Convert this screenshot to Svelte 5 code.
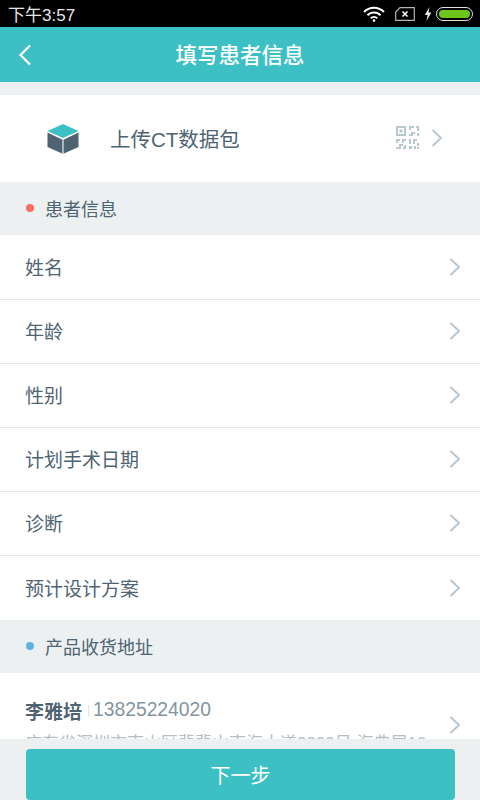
<script>
	const patient_rows = ['姓名', '年龄', '性别', '计划手术日期', '诊断', '预计设计方案']
</script>

<div class="page">
	<div class="status-bar">
		<span class="time">下午3:57</span>
		<div class="status-icons">
			<svg class="wifi" width="22" height="16" viewBox="0 0 22 16" fill="none" stroke="#fff" stroke-width="2">
				<path d="M1 6 A14 14 0 0 1 21 6" />
				<path d="M4.5 9.3 A9 9 0 0 1 17.5 9.3" />
				<path d="M7.8 12.2 A4.6 4.6 0 0 1 14.2 12.2" />
				<circle cx="11" cy="14.6" r="1.3" fill="#fff" stroke="none" />
			</svg>
			<svg class="sim" width="20" height="14" viewBox="0 0 20 14" fill="none" stroke="#b5b5b5">
				<path d="M5 .7 H19.3 V13.3 H.7 V5 Z" stroke-width="1.2" />
				<path d="M7.5 4.5 L12.5 9.5 M12.5 4.5 L7.5 9.5" stroke="#fff" stroke-width="1.6" />
			</svg>
			<svg class="bolt" width="8" height="14" viewBox="0 0 8 14">
				<path d="M5.5 0 L.8 8 H3.6 L2.5 14 L7.4 5.6 H4.5 Z" fill="#e8e8e8" />
			</svg>
			<div class="battery"><div class="battery-fill"></div></div>
		</div>
	</div>

	<header class="title-bar">
		<svg class="back" width="14" height="22" viewBox="0 0 14 22" fill="none" stroke="#fff" stroke-width="2.2">
			<path d="M12 1.5 L2.5 11 L12 20.5" />
		</svg>
		<h1>填写患者信息</h1>
	</header>

	<main class="content">
		<div class="upload-row">
			<svg class="box" width="32" height="32" viewBox="0 0 34 32">
				<path d="M17 0 L33.5 7.5 L17 15 L.5 7.5 Z" fill="#3cc0c4" />
				<path d="M.5 9 L16 16.4 V31.5 L.5 24.5 Z" fill="#4f6473" />
				<path d="M33.5 9 L18 16.4 V31.5 L33.5 24.5 Z" fill="#4f6473" />
				<path d="M17 16.4 V31.5" stroke="#a4b2ba" stroke-width="2" />
			</svg>
			<span class="upload-label">上传CT数据包</span>
			<svg class="qr" width="23" height="23" viewBox="0 0 23 23" fill="#b9c7cf">
				<path d="M0 0 H10 V10 H0 Z M2 2 V8 H8 V2 Z" fill-rule="evenodd" />
				<rect x="3.5" y="3.5" width="3" height="3" />
				<path d="M13 0 H18 V2 H15 V4 H13 Z M20 0 H23 V5 H21 V2 H20 Z M15 6 H19 V8 H17 V10 H13 V8 H15 Z M21 7 H23 V10 H21 Z" />
				<path d="M0 13 H4 V15 H2 V17 H0 Z M6 13 H10 V15 H8 V17 H6 Z M3 18 H7 V20 H5 V23 H0 V21 H3 Z M8 19 H10 V23 H7 V21 H8 Z" />
				<path d="M13 13 H15 V18 H13 Z M17 13 H21 V15 H19 V18 H17 Z M21 17 H23 V20 H21 Z M13 20 H16 V23 H13 Z M18 20 H20 V23 H18 Z M21 21 H23 V23 H21 Z" />
			</svg>
			<svg class="chevron" width="12" height="18" viewBox="0 0 12 18" fill="none" stroke="#b9c7cf" stroke-width="2">
				<path d="M1.5 1 L10 9 L1.5 17" />
			</svg>
		</div>

		<div class="section-title">
			<i class="dot red"></i>
			<span>患者信息</span>
		</div>
		<div class="rows">
			{#each patient_rows as row}
				<div class="row">
					<span>{row}</span>
					<svg class="chevron" width="12" height="18" viewBox="0 0 12 18" fill="none" stroke="#b9c7cf" stroke-width="2">
						<path d="M1.5 1 L10 9 L1.5 17" />
					</svg>
				</div>
			{/each}
		</div>

		<div class="section-title">
			<i class="dot blue"></i>
			<span>产品收货地址</span>
		</div>
		<div class="address">
			<div class="address-text">
				<div class="contact">
					<span class="name">李雅培</span>
					<i class="divider"></i>
					<span class="phone">13825224020</span>
				</div>
				<p>广东省深圳市南山区翡翡山南海大道3399号 海典居10</p>
			</div>
			<svg class="chevron" width="12" height="18" viewBox="0 0 12 18" fill="none" stroke="#b9c7cf" stroke-width="2">
				<path d="M1.5 1 L10 9 L1.5 17" />
			</svg>
		</div>
	</main>

	<footer class="footer">
		<button>下一步</button>
	</footer>
</div>

<style>
	:global(body) {
		margin: 0;
	}
	.page {
		width: 480px;
		height: 800px;
		display: flex;
		flex-direction: column;
		overflow: hidden;
		background-color: #ecf0f1;
		font-family: 'Liberation Sans', 'Noto Sans CJK SC', sans-serif;
		color: #4f6473;
	}
	.status-bar {
		height: 27px;
		flex-shrink: 0;
		display: flex;
		align-items: center;
		justify-content: space-between;
		padding: 0 7px 0 8px;
		background-color: #000;
		color: #e6e6e6;
	}
	.time {
		font-size: 17px;
	}
	.status-icons {
		display: flex;
		align-items: center;
	}
	.sim {
		margin-left: 10px;
	}
	.bolt {
		margin-left: 9px;
	}
	.battery {
		width: 37px;
		height: 14px;
		margin-left: 4px;
		padding: 2px;
		box-sizing: border-box;
		border: 1px solid #e0e0e0;
		border-radius: 7px;
	}
	.battery-fill {
		height: 100%;
		border-radius: 4px;
		background-color: #6cc61e;
	}
	.title-bar {
		height: 55px;
		flex-shrink: 0;
		position: relative;
		display: flex;
		align-items: center;
		justify-content: center;
		padding-bottom: 3px;
		box-sizing: border-box;
		background-color: #3cc0c4;
	}
	.back {
		position: absolute;
		left: 18px;
		top: 17px;
	}
	h1 {
		margin: 0;
		font-size: 21.5px;
		font-weight: 500;
		color: #fff;
	}
	.content {
		flex: 1;
		min-height: 0;
		overflow: hidden;
		padding-top: 13px;
	}
	.upload-row {
		height: 87px;
		box-sizing: border-box;
		display: flex;
		align-items: center;
		padding: 0 37px 2px 47px;
		background-color: #fff;
	}
	.box {
		margin-top: 2px;
	}
	.upload-label {
		flex: 1;
		margin-left: 31px;
		font-size: 20.5px;
	}
	.chevron {
		flex-shrink: 0;
	}
	.upload-row .chevron {
		margin-left: 12px;
	}
	.section-title {
		height: 53px;
		box-sizing: border-box;
		display: flex;
		align-items: center;
		padding: 0 0 2px 26px;
		font-size: 18px;
	}
	.dot {
		width: 8px;
		height: 8px;
		margin-right: 11px;
		border-radius: 50%;
	}
	.red {
		background-color: #fa6e5f;
	}
	.blue {
		background-color: #5ab4de;
	}
	.rows {
		background-color: #fff;
	}
	.row {
		height: 64px;
		box-sizing: border-box;
		display: flex;
		align-items: center;
		justify-content: space-between;
		padding: 0 19px 1px 25px;
		border-bottom: 1px solid #e6eaec;
		font-size: 19px;
	}
	.row:first-child {
		height: 65px;
	}
	.row:not(:first-child) span {
		margin-bottom: 2px;
	}
	.row:last-child {
		border-bottom: none;
		padding-bottom: 0;
	}
	.address {
		height: 104px;
		display: flex;
		align-items: center;
		justify-content: space-between;
		padding: 0 19px 0 25px;
		background-color: #fff;
	}
	.address-text {
		align-self: flex-start;
		width: 402px;
		padding-top: 23px;
		overflow: hidden;
	}
	.contact {
		display: flex;
		align-items: center;
		height: 28px;
	}
	.name {
		font-size: 19px;
		font-weight: 700;
	}
	.divider {
		width: 1px;
		height: 12px;
		margin: 2px 4px 0 6px;
		background-color: #dfe4e7;
	}
	.phone {
		font-size: 19.3px;
		color: #83949f;
	}
	.address-text p {
		margin: 5px 0 0;
		font-size: 17px;
		white-space: nowrap;
		color: #b4bec4;
	}
	.footer {
		height: 61px;
		flex-shrink: 0;
		box-sizing: border-box;
		padding: 10px 25px 0 26px;
		background-color: #ecf0f1;
	}
	button {
		width: 100%;
		height: 51px;
		border: none;
		border-radius: 4px;
		background-color: #3cc0c4;
		color: #fff;
		font-family: inherit;
		font-size: 20px;
	}
</style>
